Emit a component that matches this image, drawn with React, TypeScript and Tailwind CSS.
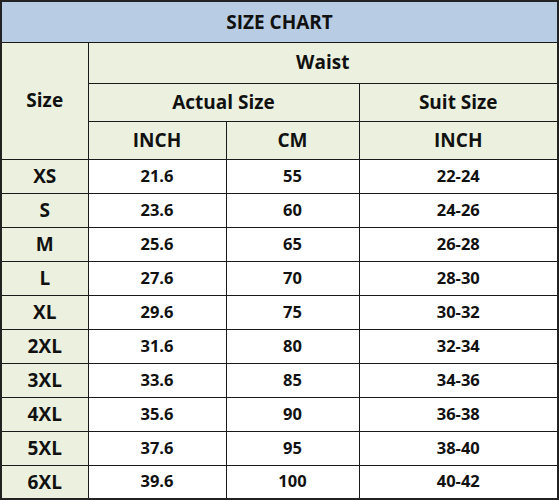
import React from 'react';

const rows = [
  ['XS', '21.6', '55', '22-24'],
  ['S', '23.6', '60', '24-26'],
  ['M', '25.6', '65', '26-28'],
  ['L', '27.6', '70', '28-30'],
  ['XL', '29.6', '75', '30-32'],
  ['2XL', '31.6', '80', '32-34'],
  ['3XL', '33.6', '85', '34-36'],
  ['4XL', '35.6', '90', '36-38'],
  ['5XL', '37.6', '95', '38-40'],
  ['6XL', '39.6', '100', '40-42'],
];

export default function App() {
  const hd = 'border border-[#1a1a1a] bg-[#ecf1df] text-[19px] font-bold text-[#111] text-center p-0';
  const cell = 'border border-[#1a1a1a] text-[16.5px] font-bold text-[#111] text-center p-0';
  return (
    <div className="w-[560px] h-[500px] bg-white font-['Open_Sans',sans-serif]">
      <table className="w-[557px] border-collapse table-fixed border-2 border-[#222]">
        <colgroup>
          <col className="w-[87px]" />
          <col className="w-[138px]" />
          <col className="w-[133px]" />
          <col className="w-[199px]" />
        </colgroup>
        <tbody>
          <tr className="h-[41px]">
            <td colSpan={4} className="border border-[#1a1a1a] bg-[#b8cce4] text-[19px] font-bold text-[#111] text-center p-0">
              SIZE CHART
            </td>
          </tr>
          <tr className="h-[41px]">
            <td rowSpan={3} className={hd}>Size</td>
            <td colSpan={3} className={hd}>Waist</td>
          </tr>
          <tr className="h-[38px]">
            <td colSpan={2} className={hd}>Actual Size</td>
            <td className={hd}>Suit Size</td>
          </tr>
          <tr className="h-[38px]">
            <td className={hd}>INCH</td>
            <td className={hd}>CM</td>
            <td className={hd}>INCH</td>
          </tr>
          {rows.map((r) => (
            <tr key={r[0]} className="h-[34px]">
              <td className={hd}>{r[0]}</td>
              <td className={cell}>{r[1]}</td>
              <td className={cell}>{r[2]}</td>
              <td className={cell}>{r[3]}</td>
            </tr>
          ))}
        </tbody>
      </table>
    </div>
  );
}
